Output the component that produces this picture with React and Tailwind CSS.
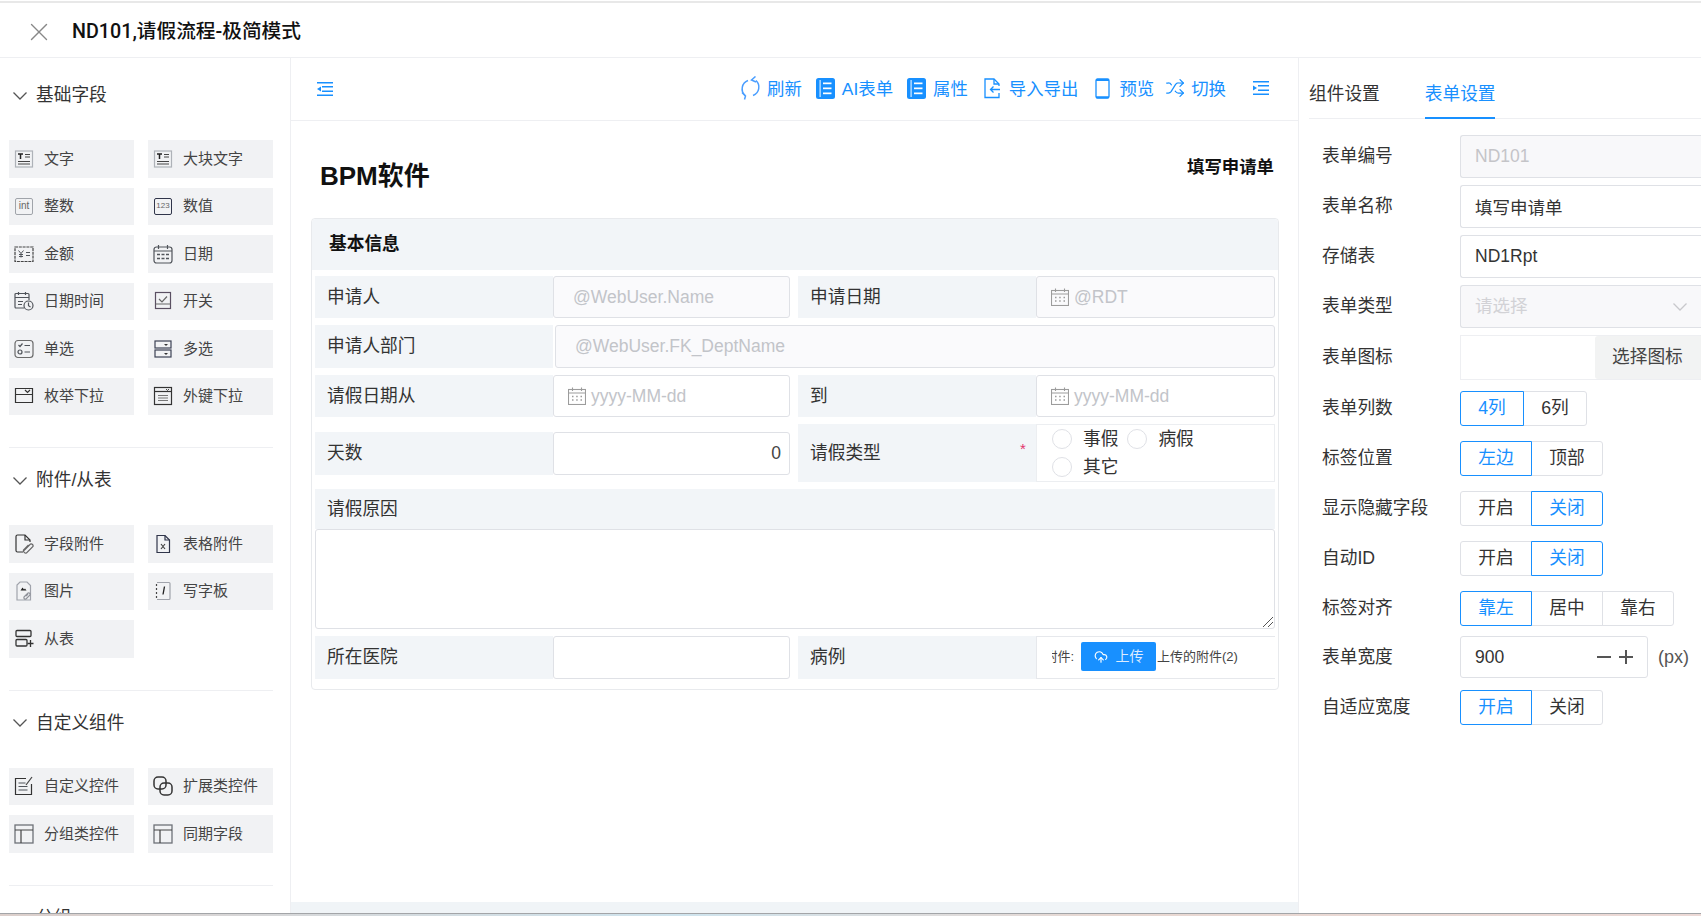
import React from "react";
import { CloudUpload, Shuffle, X } from "lucide-react";

const Svg = ({ children, w = 20, h = 20, className = "" }) => (
  <svg width={w} height={h} viewBox={`0 0 ${w} ${h}`} fill="none" stroke="#50545a" strokeWidth="1.2" className={`shrink-0 ${className}`}>
    {children}
  </svg>
);

const Chevron = ({ color = "#555", className = "" }) => (
  <svg width="14" height="8" viewBox="0 0 14 8" fill="none" stroke={color} strokeWidth="1.3" className={`shrink-0 ${className}`}>
    <path d="M0.5 0.5L7 7L13.500 0.5" />
  </svg>
);

const IconText = () => (
  <Svg>
    <rect x="1.5" y="2" width="17" height="16" stroke="#aeb2b8" />
    <path d="M4 5h5M6.5 5v5" stroke="#222" strokeWidth="1.5" />
    <path d="M11 5.5h5M11 8h5M4 12.5h12M4 15h12" stroke="#444" />
  </Svg>
);
const IconInt = () => (
  <span className="w-[18px] h-[17px] ml-[1px] mr-[1px] shrink-0 border border-[#a0a4aa] rounded-[2px] flex items-center justify-center text-[10px] leading-none text-[#666]">int</span>
);
const Icon123 = () => (
  <span className="w-[18px] h-[17px] ml-[1px] mr-[1px] shrink-0 border border-[#30354a] rounded-[2px] flex items-center justify-center text-[8px] leading-none text-[#666]">123</span>
);
const IconMoney = () => (
  <Svg>
    <path d="M1 3h18v14.500H1z" stroke="#444" strokeDasharray="3 0.8" />
    <path d="M4.5 6.5l2.5 3 2.500-3M7 9.500v4M5 10.500h4M5 12.500h4M12 8.500h4M12 11.500h4" strokeWidth="1" />
  </Svg>
);
const IconCal = () => (
  <Svg>
    <rect x="1" y="3" width="18" height="16" rx="2.5" />
    <path d="M1 7h18M5.500 1v4M14.500 1v4" />
    <path d="M4 10.500h3M8.500 10.500h3M13 10.500h3M4 14.500h3M8.500 14.500h3M13 14.500h3" strokeWidth="1.3" />
  </Svg>
);
const IconDateTime = () => (
  <Svg>
    <path d="M10 17H2a1 1 0 0 1-1-1V3.500a1 1 0 0 1 1-1h12a1 1 0 0 1 1 1V9" />
    <path d="M1 6.500h14M4.500 1v3M11.500 1v3M4 10.500h5M4 13.500h4" />
    <circle cx="14.500" cy="14.500" r="4.500" />
    <path d="M14.500 11.500v3.200l2 1.200" />
  </Svg>
);
const IconSwitch = () => (
  <Svg>
    <rect x="2.500" y="1.500" width="15" height="16" stroke="#5a4f62" />
    <path d="M2.500 13h15M6 8l3 3 5-5.500" stroke="#666" />
  </Svg>
);
const IconRadio = () => (
  <Svg>
    <rect x="1" y="1.500" width="18" height="17" rx="3" stroke="#6a6a6a" />
    <path d="M4.500 6l1.500 1.500L8.500 4.500M10.500 6.500h5.500M10.500 13h5.500" />
    <circle cx="6" cy="13" r="2" />
  </Svg>
);
const IconMulti = () => (
  <Svg>
    <rect x="2" y="2" width="16" height="7" stroke="#3c4254" />
    <rect x="2" y="11" width="16" height="7" stroke="#3c4254" />
    <path d="M11 5l2 2 2-2zM11 14l2 2 2-2z" fill="#333" stroke="none" />
  </Svg>
);
const IconEnum = () => (
  <Svg>
    <path d="M1.500 2.500h17v6h-17zM1.500 8.500v8h17v-8" stroke="#333" />
    <path d="M11 4l2.500 2.500L16 4" stroke="#333" />
  </Svg>
);
const IconFk = () => (
  <Svg>
    <rect x="1.500" y="1.500" width="17" height="17" stroke="#333" />
    <path d="M1.500 5.500h17" stroke="#333" />
    <path d="M13 3l1.500 1.500L16 3" stroke="#333" strokeWidth="0.9" />
    <path d="M5 9.500h10M5 12h10M5 14.500h10" stroke="#777" />
  </Svg>
);
const IconClipDoc = () => (
  <Svg>
    <path d="M9 18H3.500a1.500 1.500 0 0 1-1.500-1.500V2.500A1.500 1.500 0 0 1 3.500 1H11l5 5v2" stroke="#333" />
    <path d="M11 1v5h5" stroke="#333" />
    <path d="M10 16.500l6.500-6.500a2 2 0 0 1 2.500 2.500l-6.500 6.500a2.500 2.500 0 0 1-3-3l5-5" stroke="#666" />
  </Svg>
);
const IconXls = () => (
  <Svg>
    <path d="M4 1.500h8l4.500 4.500v12.500H4z" stroke="#30354a" />
    <path d="M12 1.500V6h4.500" stroke="#30354a" />
    <path d="M8 10l4 5M12 10l-4 5" stroke="#444" />
  </Svg>
);
const IconImg = () => (
  <Svg>
    <path d="M6 1h7l3.500 3.500V19H3V4z" stroke="#a0a3ab" />
    <path d="M6.500 9.500l2-3 1.500 2 1-1 1.500 2z" fill="#222" stroke="none" />
    <path d="M10 16l4-4a1.500 1.500 0 0 1 2 2l-4 4a1.500 1.500 0 0 1-2-2zM12 15l2-2" stroke="#8f929a" />
  </Svg>
);
const IconPad = () => (
  <Svg>
    <path d="M4 1.500h12a1 1 0 0 1 1 1v15a1 1 0 0 1-1 1H4" stroke="#a0a3ab" />
    <path d="M3.500 3v15" stroke="#444" strokeDasharray="2 2" />
    <path d="M11.500 5.500l-1.500 8" stroke="#222" strokeWidth="1.300" />
  </Svg>
);
const IconSub = () => (
  <Svg>
    <rect x="2" y="1.500" width="15" height="6" rx="1" stroke="#333" strokeWidth="1.300" />
    <rect x="2" y="10.500" width="11" height="6.500" rx="1" stroke="#333" strokeWidth="1.300" />
    <path d="M16.500 11v7M13.500 14.500h6" stroke="#333" strokeWidth="1.300" />
  </Svg>
);
const IconCustom = () => (
  <Svg>
    <path d="M12 2.500H1.500v16h16V8" stroke="#333" strokeWidth="1.200" />
    <path d="M4.500 7h7M4.500 10.500h9M4.500 14h9" />
    <path d="M12 9l6-8" stroke="#444" />
  </Svg>
);
const IconLink = () => (
  <Svg>
    <rect x="1" y="1" width="12" height="12" rx="4" stroke="#333" strokeWidth="1.500" />
    <rect x="7" y="7" width="12" height="12" rx="4" stroke="#333" strokeWidth="1.500" />
  </Svg>
);
const IconLayout = () => (
  <Svg>
    <rect x="1" y="1" width="18" height="18" stroke="#6e7178" strokeWidth="1.300" />
    <path d="M1 6h18M7 6v13" stroke="#444" />
  </Svg>
);

const CalendarSmall = () => (
  <svg width="18" height="18" viewBox="0 0 18 18" fill="none" stroke="#9c9c9c" strokeWidth="1.100" className="shrink-0">
    <rect x="0.500" y="2.500" width="17" height="15" />
    <path d="M0.500 6h17M4.500 0.500v3.500M13.500 0.500v3.500" />
    <path d="M4 9.500h1.500M8.200 9.500h1.500M12.500 9.500h1.500M4 13h1.500M8.200 13h1.500M12.500 13h1.500" strokeWidth="1.400" />
  </svg>
);

const blue = "#1890ff";

const IndentIcon = ({ flip }) => (
  <svg width="16" height="14" viewBox="0 0 16 14" fill={blue} className="shrink-0">
    <rect width="16" height="1.5" />
    <rect x="5" y="4" width="11" height="1.5" />
    <rect x="5" y="8.500" width="11" height="1.5" />
    <rect y="12.500" width="16" height="1.5" />
    {flip ? <path d="M0 4.500L4 7L0 9.500z" /> : <path d="M4 4.500L0 7L4 9.500z" />}
  </svg>
);
const RefreshIcon = () => (
  <svg width="21" height="24" viewBox="0 0 21 24" fill="none" stroke="#4a9eff" strokeWidth="1.500" className="shrink-0">
    <path d="M8 4.500A9 9 0 0 0 5 19.500" />
    <path d="M2 16.500l3.500 3.500-1 3.500" />
    <path d="M13 19.500A9 9 0 0 0 16 4.500" />
    <path d="M15.500 0.500L11.500 4l4.500 2" />
  </svg>
);
const SheetIcon = () => (
  <svg width="19" height="21" viewBox="0 0 19 21" className="shrink-0">
    <rect width="19" height="21" rx="2.5" fill={blue} />
    <rect x="3.500" y="2" width="1.200" height="17" fill="#d6ebff" />
    <rect x="7" y="4.500" width="8.500" height="1.700" fill="#ffffff" />
    <rect x="7" y="9.500" width="8.500" height="1.700" fill="#ffffff" />
    <rect x="7" y="14.500" width="8.500" height="1.700" fill="#ffffff" />
  </svg>
);
const ImportIcon = () => (
  <svg width="16" height="21" viewBox="0 0 16 21" fill="none" stroke={blue} strokeWidth="1.300" className="shrink-0">
    <path d="M15 15v4.500H1V1h9l5 5v2" />
    <path d="M10 1v5h5" />
    <path d="M16 11.500H7M9.500 8.500l-3 3 3 3" />
  </svg>
);
const PhoneIcon = () => (
  <svg width="15" height="21" viewBox="0 0 15 21" fill="none" stroke={blue} strokeWidth="1.300" className="shrink-0">
    <rect x="1" y="1" width="13" height="19" rx="1.5" />
    <path d="M1 2h13M1 19.300h13" strokeWidth="2" />
  </svg>
);

const fields = [
  { title: "基础字段", items: [
    ["文字", IconText], ["大块文字", IconText],
    ["整数", IconInt], ["数值", Icon123],
    ["金额", IconMoney], ["日期", IconCal],
    ["日期时间", IconDateTime], ["开关", IconSwitch],
    ["单选", IconRadio], ["多选", IconMulti],
    ["枚举下拉", IconEnum], ["外键下拉", IconFk],
  ]},
  { title: "附件/从表", items: [
    ["字段附件", IconClipDoc], ["表格附件", IconXls],
    ["图片", IconImg], ["写字板", IconPad],
    ["从表", IconSub],
  ]},
  { title: "自定义组件", items: [
    ["自定义控件", IconCustom], ["扩展类控件", IconLink],
    ["分组类控件", IconLayout], ["同期字段", IconLayout],
  ]},
  { title: "分组", items: [] },
];

const Sidebar = () => (
  <aside className="w-[291px] shrink-0 border-r border-[#eeeff2] pt-[6px] overflow-hidden">
    {fields.map((s) => (
      <section key={s.title} className="w-[264px] ml-[9px] pt-[12px] pb-[32px] border-b border-[#eeeff2]">
        <div className="h-[41px] flex items-center gap-[9px] pl-[4px] text-[17.7px] text-[#333]">
          <Chevron />
          <span>{s.title}</span>
        </div>
        <div className="mt-[24px] grid grid-cols-[125px_125px] gap-x-[14px] gap-y-[10px] auto-rows-[37.5px]">
          {s.items.map(([label, Icon]) => (
            <div key={label} className="bg-[#f1f2f4] flex items-center gap-[10px] pl-[5px] text-[15px] text-[#444]">
              <Icon />
              <span>{label}</span>
            </div>
          ))}
        </div>
      </section>
    ))}
  </aside>
);

const ToolItem = ({ icon, label, className = "" }) => (
  <div className={`flex items-center ${className}`}>
    {icon}
    <span className="pt-[2px]">{label}</span>
  </div>
);

const Toolbar = () => (
  <div className="h-[64px] shrink-0 border-b border-[#eeeff2] flex items-center pl-[26px] pr-[29px] text-[17.4px] text-[#1890ff]">
    <IndentIcon />
    <div className="ml-auto flex items-center">
      <ToolItem icon={<RefreshIcon />} label="刷新" className="gap-[6px]" />
      <ToolItem icon={<SheetIcon />} label="AI表单" className="ml-[14px] gap-[7px]" />
      <ToolItem icon={<SheetIcon />} label="属性" className="ml-[14px] gap-[7px]" />
      <ToolItem icon={<ImportIcon />} label="导入导出" className="ml-[16px] gap-[9px]" />
      <ToolItem icon={<PhoneIcon />} label="预览" className="ml-[17px] gap-[9px]" />
      <ToolItem icon={<Shuffle size={20} strokeWidth={1.5} />} label="切换" className="ml-[11px] gap-[6px]" />
      <div className="ml-[27px]"><IndentIcon flip /></div>
    </div>
  </div>
);

const Label = ({ children, className = "" }) => (
  <div className={`bg-[#f2f5f8] flex items-center pl-[12px] text-[17.7px] text-[#333] ${className}`}>{children}</div>
);

const inputCls = "border border-[#dfe1e6] rounded-[3px] flex items-center text-[17.5px]";

const DateInput = ({ text, disabled }) => (
  <div className={`${inputCls} pl-[14px] gap-[5px] text-[#c2c4c9] ${disabled ? "bg-[#fafafc]" : "bg-white"}`}>
    <CalendarSmall />
    <span>{text}</span>
  </div>
);

const Radio = ({ label }) => (
  <div className="flex items-center gap-[11px] text-[17.7px] leading-[24px] text-[#333]">
    <span className="w-[20px] h-[20px] rounded-full border border-[#dfe1e6] bg-white shrink-0" />
    <span>{label}</span>
  </div>
);

const FormCard = () => (
  <div className="ml-[20px] mt-[97px] w-[968px] h-[472px] border border-[#e8eaed] rounded-[4px] flex flex-col">
    <div className="h-[51px] shrink-0 bg-[#f2f5f8] rounded-t-[4px] flex items-center pl-[17px] text-[17.7px] font-bold text-[#111]">基本信息</div>
    <div className="ml-[3px] mt-[6px] w-[960px] grid grid-cols-[238px_237px_8px_238px_239px]">
      <Label className="h-[42px]">申请人</Label>
      <div className={`${inputCls} bg-[#fafafc] pl-[19px] text-[#c2c4c9]`}>@WebUser.Name</div>
      <div />
      <Label>申请日期</Label>
      <DateInput text="@RDT" disabled />

      <Label className="h-[43px] mt-[7px]">申请人部门</Label>
      <div className={`${inputCls} col-span-4 mt-[7px] ml-[2px] bg-[#fafafc] pl-[19px] text-[#c2c4c9]`}>@WebUser.FK_DeptName</div>

      <Label className="h-[42px] mt-[7px]">请假日期从</Label>
      <div className="mt-[7px] grid"><DateInput text="yyyy-MM-dd" /></div>
      <div />
      <Label className="mt-[7px]">到</Label>
      <div className="mt-[7px] grid"><DateInput text="yyyy-MM-dd" /></div>

      <div className="mt-[7px] h-[58px] flex items-center col-span-2">
        <Label className="w-[238px] h-[43px]">天数</Label>
        <div className={`${inputCls} w-[237px] h-[43px] bg-white justify-end pr-[8px] text-[#444]`}>0</div>
      </div>
      <div />
      <Label className="mt-[7px] relative">
        请假类型
        <span className="absolute left-[222px] top-[17px] text-[15px] leading-none text-[#e2336b]">*</span>
      </Label>
      <div className="mt-[7px] h-[58px] border border-[#eceef1] pl-[15px] flex flex-col justify-center gap-[4px]">
        <div className="flex items-center gap-[9px]">
          <Radio label="事假" />
          <Radio label="病假" />
        </div>
        <Radio label="其它" />
      </div>

      <Label className="col-span-5 h-[40px] mt-[7px]">请假原因</Label>
      <div className="col-span-5 h-[100px] border border-[#dfe1e6] rounded-[3px] relative">
        <svg width="10" height="10" viewBox="0 0 10 10" stroke="#555" className="absolute right-[1px] bottom-[1px]">
          <path d="M0 10L10 0M5 10L10 5" />
        </svg>
      </div>

      <Label className="h-[43px] mt-[7px]">所在医院</Label>
      <div className={`${inputCls} mt-[7px] bg-white`} />
      <div />
      <Label className="mt-[7px]">病例</Label>
      <div className="mt-[7px] pb-[2px] border-l border-b border-t border-[#e6e8ec] flex items-center text-[13px] text-[#444]">
        <div className="ml-[15px] mr-[7px] w-[22px] overflow-hidden flex justify-end whitespace-nowrap">附件:</div>
        <div className="w-[75px] h-[29px] bg-[#1890ff] rounded-[2px] flex items-center justify-center gap-[8px] shrink-0 text-[14px] text-[#dcecff]">
          <CloudUpload size={14} strokeWidth={2} className="text-white" />
          <span>上传</span>
        </div>
        <span className="ml-[1px]">上传的附件(2)</span>
      </div>
    </div>
  </div>
);

const Center = () => (
  <main className="w-[1008px] shrink-0 border-r border-[#eeeff2] flex flex-col overflow-hidden">
    <Toolbar />
    <div className="flex-1 relative">
      <h1 className="absolute left-[29px] top-[39px] text-[26px] leading-[32px] font-bold text-[#111]">BPM软件</h1>
      <span className="absolute right-[24px] top-[34px] text-[17.4px] leading-[24px] font-bold text-[#111]">填写申请单</span>
      <FormCard />
    </div>
    <div className="h-[11px] shrink-0 bg-[#f0f4f7]" />
  </main>
);

const Seg = ({ options, active, width = "w-[72px]" }) => (
  <div className="flex">
    {options.map((o, i) => (
      <div
        key={o}
        className={`h-[35px] flex items-center justify-center text-[17.7px] ${width} border ${i === active ? "border-[#1890ff] text-[#1890ff] z-10" : "border-[#dfe1e6] text-[#333]"} ${i > 0 ? "-ml-[1px]" : ""} ${i === 0 ? "rounded-l-[3px]" : ""} ${i === options.length - 1 ? "rounded-r-[3px]" : ""}`}
      >
        {o}
      </div>
    ))}
  </div>
);

const Row = ({ label, children, className = "" }) => (
  <div className={`flex items-center ${className}`}>
    <div className="w-[160px] pl-[22px] shrink-0 text-[17.7px] text-[#333]">{label}</div>
    {children}
  </div>
);

const ctl = "w-[241px] h-[43px] border border-[#dfe1e6] rounded-l-[3px] border-r-0 flex items-center pl-[14px] text-[17.5px]";

const Settings = () => (
  <aside className="flex-1 pl-[1px] overflow-hidden">
    <div className="ml-[9px] h-[62px] border-b border-[#eeeff2] flex items-end gap-[45px] text-[17.7px]">
      <div className="h-[49px] pt-[12px] text-[#333]">组件设置</div>
      <div className="h-[49px] pt-[12px] text-[#1890ff] relative w-[70px] whitespace-nowrap">
        表单设置
        <span className="absolute left-0 right-0 bottom-[-1px] h-[2px] bg-[#1890ff]" />
      </div>
    </div>
    <div className="pt-[16px] flex flex-col">
      <Row label="表单编号"><div className={`${ctl} bg-[#f8f8fa] text-[#c4c4c8]`}>ND101</div></Row>
      <Row label="表单名称" className="mt-[7px]"><div className={`${ctl} pt-[3px] text-[#333]`}>填写申请单</div></Row>
      <Row label="存储表" className="mt-[7px]"><div className={`${ctl} text-[#333]`}>ND1Rpt</div></Row>
      <Row label="表单类型" className="mt-[7px]">
        <div className={`${ctl} bg-[#f8f8fa] text-[#d2d2d6] justify-between`}>
          <span>请选择</span>
          <Chevron color="#c8c8cc" className="mr-[14px]" />
        </div>
      </Row>
      <Row label="表单图标" className="mt-[7px]">
        <div className="w-[241px] h-[45px] border border-[#eeeff2] border-r-0 flex justify-end">
          <div className="w-[106px] bg-[#f2f3f3] rounded-l-[3px] flex items-center pl-[17px] text-[17.7px] text-[#444]">选择图标</div>
        </div>
      </Row>
      <Row label="表单列数" className="mt-[11px]"><Seg options={["4列", "6列"]} active={0} width="w-[64px]" /></Row>
      <Row label="标签位置" className="mt-[15px]"><Seg options={["左边", "顶部"]} active={0} /></Row>
      <Row label="显示隐藏字段" className="mt-[15px]"><Seg options={["开启", "关闭"]} active={1} /></Row>
      <Row label="自动ID" className="mt-[15px]"><Seg options={["开启", "关闭"]} active={1} /></Row>
      <Row label="标签对齐" className="mt-[15px]"><Seg options={["靠左", "居中", "靠右"]} active={0} /></Row>
      <Row label="表单宽度" className="mt-[10px]">
        <div className="w-[188px] h-[42px] border border-[#dfe1e6] rounded-[3px] flex items-center px-[14px] text-[17.5px] text-[#333]">
          <span>900</span>
          <span className="ml-auto w-[14px] h-[1.5px] bg-[#555]" />
          <span className="ml-[8px] w-[14px] h-[14px] relative">
            <span className="absolute left-0 right-0 top-[6px] h-[1.5px] bg-[#555]" />
            <span className="absolute top-0 bottom-0 left-[6px] w-[1.5px] bg-[#555]" />
          </span>
        </div>
        <span className="ml-[10px] text-[18px] text-[#555]">(px)</span>
      </Row>
      <Row label="自适应宽度" className="mt-[12px]"><Seg options={["开启", "关闭"]} active={0} /></Row>
    </div>
  </aside>
);

export default function App() {
  return (
    <div className="w-[1701px] h-[916px] overflow-hidden bg-white flex flex-col font-['Liberation_Sans','Noto_Sans_CJK_SC',sans-serif]">
      <header className="h-[57px] shrink-0 mt-[1px] pt-[3px] border-t-2 border-b border-t-[#e8e8e8] border-b-[#eeeff2] flex items-center text-[19.7px] font-medium text-[#111] -mb-[1px] font-['Roboto','Noto_Sans_CJK_SC',sans-serif]">
        <X size={30} strokeWidth={1.1} className="ml-[24px] text-[#888]" />
        <span className="ml-[18px]">ND101,请假流程-极简模式</span>
      </header>
      <div className="flex flex-1 min-h-0">
        <Sidebar />
        <Center />
        <Settings />
      </div>
      <div className="h-[3px] shrink-0 border-t border-[#a3a5a8] bg-[linear-gradient(90deg,#dccfcb_0%,#cfe4ee_40%,#e8d8d2_65%,#ecd9d6_100%)]" />
    </div>
  );
}
